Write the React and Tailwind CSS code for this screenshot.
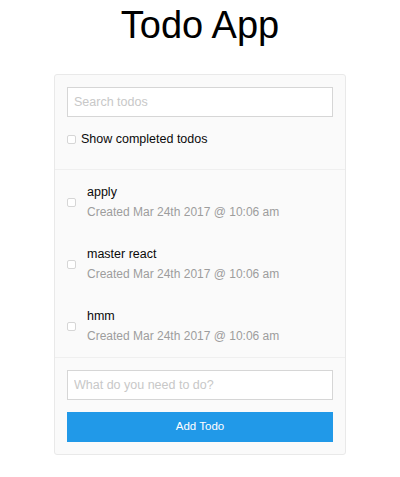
const TODOS = [
  { id: 1, text: 'apply', created: 'Created Mar 24th 2017 @ 10:06 am' },
  { id: 2, text: 'master react', created: 'Created Mar 24th 2017 @ 10:06 am' },
  { id: 3, text: 'hmm', created: 'Created Mar 24th 2017 @ 10:06 am' },
];

function Box() {
  return <span className="block w-[9px] h-[9px] rounded-[2px] border border-[#d6d6d6] bg-white shrink-0" />;
}

export default function App() {
  return (
    <div className="min-h-[477px] bg-white font-['Liberation_Sans',Arial,sans-serif] text-[#0a0a0a]">
      <h1 className="pt-[3px] text-center text-[38px] leading-[45px] font-normal text-black">Todo App</h1>

      <div className="mx-auto mt-[26px] w-[292px] border border-[#e9e9e9] rounded-[3px] bg-[#fafafa]">
        {/* Search */}
        <div className="px-[12px] pt-[12px] pb-[20px]">
          <input
            placeholder="Search todos"
            className="block w-full h-[30px] px-[6px] text-[12.5px] bg-white border border-[#d6d6d6] outline-none placeholder:text-[#c8c8c8]"
          />
          <label className="mt-[12px] flex items-center h-[20px] gap-[5px]">
            <Box />
            <span className="text-[12.5px] text-[#0a0a0a]">Show completed todos</span>
          </label>
        </div>

        {/* List */}
        <div className="border-t border-b border-[#efefef] pt-[1px]">
          {TODOS.map(t => (
            <div key={t.id} className="flex items-center h-[62px] px-[12px] gap-[11px]">
              <Box />
              <div>
                <p className="text-[12.5px] leading-[20px] text-[#0a0a0a]">{t.text}</p>
                <p className="text-[12px] leading-[20px] text-[#9d9d9d]">{t.created}</p>
              </div>
            </div>
          ))}
        </div>

        {/* Add */}
        <div className="px-[12px] pt-[12px] pb-[12px]">
          <input
            placeholder="What do you need to do?"
            className="block w-full h-[30px] px-[6px] text-[12.5px] bg-white border border-[#d6d6d6] outline-none placeholder:text-[#c8c8c8]"
          />
          <button className="mt-[12px] block w-full h-[30px] bg-[#2199e8] text-white text-[11.5px]">Add Todo</button>
        </div>
      </div>
    </div>
  );
}
